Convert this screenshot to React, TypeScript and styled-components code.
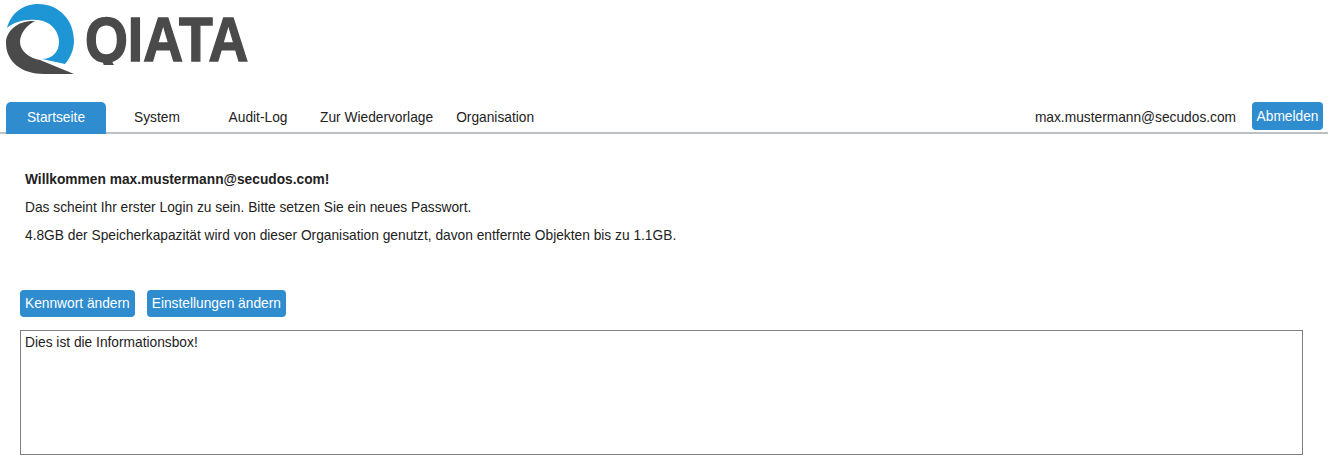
import * as React from "react"
import styled, { createGlobalStyle } from "styled-components"

const GlobalStyle = createGlobalStyle`
    html, body {
        margin: 0;
        padding: 0;
        background: #fff;
        color: #222;
        font-family: "Liberation Sans", Arial, sans-serif;
        font-size: 13.75px;
    }
`

const tabs = ["Startseite", "System", "Audit-Log", "Zur Wiedervorlage", "Organisation"]

export default function App() {
    return (
        <Page>
            <GlobalStyle />
            <Header>
                <Logo viewBox="3 1 300 96" role="img" aria-label="QIATA">
                    <defs>
                        <clipPath id="word-clip">
                            <rect x="0" y="0" width="300" height="65" />
                        </clipPath>
                    </defs>
                    <path
                        fill="#1e96d6"
                        d="M7 28 C11 13 23 4 38 4 C59 4 74 20 74 41 C74 50 70 58 65 64 L42 59 C52 59 59 52 59 42 C59 30 49 20 36 20 C24 19 14 22 7 28 Z"
                    />
                    <path
                        fill="#4b4a4b"
                        d="M6 43 C6 30 19 20 35 21 C27 25 20 33 20 42 C20 50 28 58 40 60 L74 74 L44 74 C22 74 6 62 6 43 Z"
                    />
                    <g clipPath="url(#word-clip)">
                        <LogoWord transform="translate(85 61) scale(0.875 1)">QIATA</LogoWord>
                    </g>
                </Logo>
            </Header>
            <Nav>
                {tabs.map((t, i) => (
                    <Tab key={t} $active={i === 0}>
                        {t}
                    </Tab>
                ))}
                <UserArea>
                    <UserName>max.mustermann@secudos.com</UserName>
                    <LogoutButton>Abmelden</LogoutButton>
                </UserArea>
            </Nav>
            <Content>
                <Welcome>
                    <Line>
                        <strong>Willkommen max.mustermann@secudos.com!</strong>
                    </Line>
                    <Line>Das scheint Ihr erster Login zu sein. Bitte setzen Sie ein neues Passwort.</Line>
                    <Line>
                        4.8GB der Speicherkapazität wird von dieser Organisation genutzt, davon entfernte Objekten bis
                        zu 1.1GB.
                    </Line>
                </Welcome>
                <Actions>
                    <ActionButton>Kennwort ändern</ActionButton>
                    <ActionButton>Einstellungen ändern</ActionButton>
                </Actions>
                <InfoBox>Dies ist die Informationsbox!</InfoBox>
            </Content>
        </Page>
    )
}

const Page = styled.div`
    width: 1328px;
    height: 460px;
    overflow: hidden;
`

const Header = styled.div`
    height: 102px;
    padding: 1px 0 0 3px;
    box-sizing: border-box;
`

const Logo = styled.svg`
    display: block;
    width: 300px;
    height: 96px;
`

const LogoWord = styled.text`
    font-family: "Liberation Sans", Arial, sans-serif;
    font-size: 63px;
    font-weight: 700;
    fill: #4b4a4b;
    stroke: #4b4a4b;
    stroke-width: 1.5px;
`

const Nav = styled.div`
    height: 32px;
    display: flex;
    align-items: stretch;
    gap: 1px;
    padding: 0 5px 0 6px;
    border-bottom: 2px solid #bcc0c3;
    box-sizing: border-box;
`

const Tab = styled.div<{ $active?: boolean }>`
    min-width: 78px;
    padding: 0 11px 2px;
    height: 30px;
    display: flex;
    align-items: center;
    justify-content: center;
    border-radius: 5px 5px 0 0;
    background: ${p => (p.$active ? "#2e8ccf" : "transparent")};
    color: ${p => (p.$active ? "#fff" : "#222")};
`

const UserArea = styled.div`
    margin-left: auto;
    display: flex;
    align-items: flex-start;
    gap: 16px;
`

const UserName = styled.span`
    line-height: 31px;
`

const ActionButton = styled.button`
    height: 27px;
    padding: 0 5px;
    border: 0;
    border-radius: 4px;
    background: #2e8ccf;
    color: #fff;
    font-family: inherit;
    font-size: 13.75px;
`

const LogoutButton = styled(ActionButton)`
    height: 28px;
    padding: 0 4.5px;
`

const Content = styled.div`
    padding: 0 25px 0 20px;
`

const Welcome = styled.div`
    padding: 37px 0 0 5px;
`

const Line = styled.p`
    margin: 0 0 10px;
    line-height: 18px;
`

const Actions = styled.div`
    display: flex;
    gap: 12px;
    margin-top: 45px;
`

const InfoBox = styled.div`
    margin-top: 13px;
    height: 125px;
    width: 1283px;
    box-sizing: border-box;
    border: 1px solid #808080;
    padding: 3px 4px;
    line-height: 18px;
`
